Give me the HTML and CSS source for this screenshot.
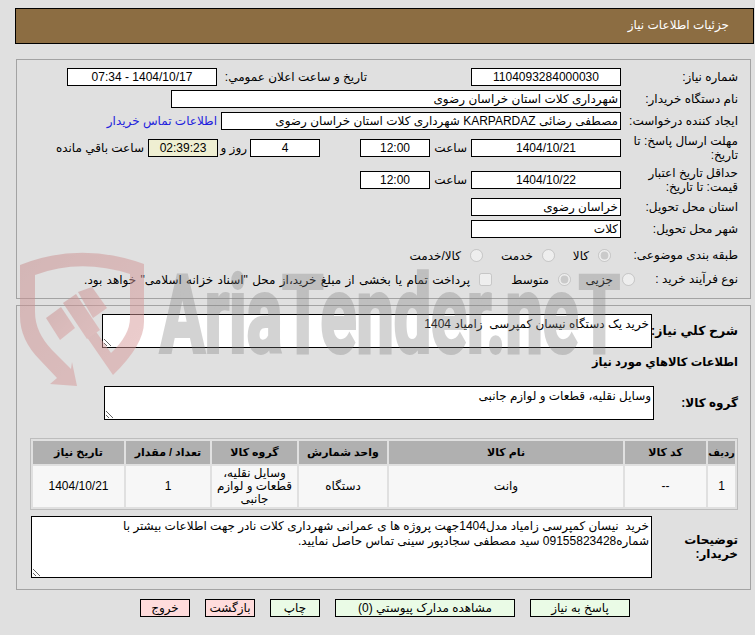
FILE: index.html
```html
<!DOCTYPE html>
<html lang="fa" dir="rtl">
<head>
<meta charset="utf-8">
<title>جزئیات اطلاعات نیاز</title>
<link rel="stylesheet" href="styles.css">
</head>
<body>
<header class="title-bar">جزئیات اطلاعات نیاز</header>

<section class="panel panel-top">
  <div class="row">
    <label class="lbl">شماره نیاز:</label>
    <input class="box w150 center" readonly value="1104093284000030">
    <label class="lbl-public">تاریخ و ساعت اعلان عمومي:</label>
    <input class="box w150 center" readonly value="1404/10/17 - 07:34">
  </div>
  <div class="row">
    <label class="lbl">نام دستگاه خریدار:</label>
    <input class="box w450" readonly value="شهرداری کلات استان خراسان رضوی">
  </div>
  <div class="row">
    <label class="lbl">ایجاد کننده درخواست:</label>
    <input class="box w400" readonly value="مصطفی رضائی KARPARDAZ شهرداری کلات استان خراسان رضوی">
    <a class="contact" href="#">اطلاعات تماس خریدار</a>
  </div>
  <div class="row">
    <label class="lbl">مهلت ارسال پاسخ: تا تاریخ:</label>
    <input class="box w150 center" readonly value="1404/10/21">
    <span class="txt-hour">ساعت</span>
    <input class="box w70 center" readonly value="12:00">
    <input class="box w70 center gap-40" readonly value="4">
    <span class="txt-day">روز و</span>
    <input class="box w70 center timer" readonly value="02:39:23">
    <span class="txt-left">ساعت باقي مانده</span>
  </div>
  <div class="row">
    <label class="lbl">حداقل تاریخ اعتبار قیمت: تا تاریخ:</label>
    <input class="box w150 center" readonly value="1404/10/22">
    <span class="txt-hour">ساعت</span>
    <input class="box w70 center" readonly value="12:00">
  </div>
  <div class="row">
    <label class="lbl">استان محل تحویل:</label>
    <input class="box w150" readonly value="خراسان رضوی">
  </div>
  <div class="row">
    <label class="lbl">شهر محل تحویل:</label>
    <input class="box w150" readonly value="کلات">
  </div>
  <div class="row row-opt row-cat">
    <label class="lbl">طبقه بندی موضوعی:</label>
    <span class="opts">
      <input type="radio" name="cat" disabled checked><span class="opt-text t-kala">کالا</span>
      <input type="radio" name="cat" disabled><span class="opt-text t-khed">خدمت</span>
      <input type="radio" name="cat" disabled><span class="opt-text">کالا/خدمت</span>
    </span>
  </div>
  <div class="row row-opt row-proc">
    <label class="lbl">نوع فرآیند خرید :</label>
    <span class="opts">
      <input type="radio" name="proc" disabled><span class="opt-text t-jozi">جزیی</span>
      <input type="radio" name="proc" disabled checked><span class="opt-text t-mot">متوسط</span>
      <input type="checkbox" disabled><span class="opt-text t-long">پرداخت تمام یا بخشی از مبلغ خرید،از محل "اسناد خزانه اسلامی" خواهد بود.</span>
    </span>
  </div>
</section>

<section class="panel panel-main">
  <div class="row row-area">
    <label class="lbl strong lbl-desc">شرح کلي نیاز:</label>
    <textarea class="area area-a" readonly>خرید یک دستگاه نیسان کمپرسی  زامیاد 1404</textarea>
  </div>
  <h2 class="sub">اطلاعات کالاهاي مورد نیاز</h2>
  <div class="row row-area row-group">
    <label class="lbl strong">گروه کالا:</label>
    <textarea class="area area-b" readonly>وسایل نقلیه، قطعات و لوازم جانبی</textarea>
  </div>
  <table class="items">
    <thead>
      <tr>
        <th class="c-row">ردیف</th>
        <th class="c-code">کد کالا</th>
        <th class="c-name">نام کالا</th>
        <th class="c-unit">واحد شمارش</th>
        <th class="c-group">گروه کالا</th>
        <th class="c-qty">تعداد / مقدار</th>
        <th class="c-date">تاریخ نیاز</th>
      </tr>
    </thead>
    <tbody>
      <tr>
        <td>1</td>
        <td>--</td>
        <td>وانت</td>
        <td>دستگاه</td>
        <td class="cell-group">وسایل نقلیه، قطعات و لوازم جانبی</td>
        <td>1</td>
        <td>1404/10/21</td>
      </tr>
    </tbody>
  </table>
  <div class="row row-area row-notes">
    <label class="lbl strong">توضیحات خریدار:</label>
    <textarea class="area area-c" readonly>خرید  نیسان کمپرسی زامیاد مدل1404جهت پروژه ها ی عمرانی شهرداری کلات نادر جهت اطلاعات بیشتر با شماره09155823428 سید مصطفی سجادپور سینی تماس حاصل نمایید.</textarea>
  </div>
</section>

<footer class="actions">
  <button class="btn ok w100">پاسخ به نیاز</button>
  <button class="btn ok w180">مشاهده مدارک پیوستي (0)</button>
  <button class="btn ok w50">چاپ</button>
  <button class="btn no w50">بازگشت</button>
  <button class="btn no w50">خروج</button>
</footer>

<svg class="watermark" width="755" height="635" viewBox="0 0 755 635" aria-hidden="true">
  <defs>
    <linearGradient id="lg" x1="0" y1="0" x2="1" y2="1">
      <stop offset="0" stop-color="#c88d8d"/>
      <stop offset="1" stop-color="#dc9d9d"/>
    </linearGradient>
  </defs>
  <g fill="url(#lg)" opacity=".5">
    <path d="M20 316V265Q80 241 144 264V322Q144 345 113 375L84 333L92 326L111 353Q130 335 130 318V274Q80 258 35 275V312Q35 332 52 350L71 369L72 362L77 386L50 384L57 378L40 360Q20 340 20 316Z"/>
    <path d="M46 318L61 307L75 328L60 340Z"/>
    <path d="M63 303L76 294L100 330L87 339Z"/>
    <path d="M78 292L92 287L107 308L93 318Z"/>
  </g>
  <text class="wm-text" x="160" y="352" textLength="460" lengthAdjust="spacingAndGlyphs">AriaTender.neT</text>
</svg>
</body>
</html>
```

FILE: styles.css
```css
* { box-sizing: border-box; }

html, body { margin: 0; padding: 0; }

body {
  position: relative;
  width: 755px;
  height: 635px;
  overflow: hidden;
  background: #e0e0e0;
  color: #000;
  font: 12px/15px "Liberation Sans", "DejaVu Sans", sans-serif;
  padding: 8px 1px 0 0;
}

.title-bar {
  height: 36px;
  margin-left: 15px;
  padding: 0 24px 0 0;
  background: #8c6d42;
  border: 1px solid #000;
  color: #fff;
  line-height: 33px;
}

.panel {
  margin-left: 16px;
  margin-right: 3px;
  border: 1px solid #a3a3a3;
  padding-right: 12px;
}

.panel-top {
  margin-top: 15px;
  height: 240px;
  padding-top: 8px;
  display: flex;
  flex-direction: column;
  gap: 4px;
}

.panel-main {
  margin-top: 6px;
  height: 285px;
  padding-top: 8px;
}

.row { display: flex; align-items: center; min-height: 18px; }

.lbl { width: 109px; margin-left: 8px; flex: none; line-height: 14px; }

.strong { font-weight: bold; font-size: 12px; }
.lbl-desc { font-size: 12.5px; white-space: nowrap; }

.box {
  height: 18px;
  border: 1px solid #000;
  background: #fff;
  padding: 0 2px;
  font: 12px "Liberation Sans", "DejaVu Sans", sans-serif;
  color: #000;
  outline: none;
  direction: rtl;
  flex: none;
}

.center { text-align: center; }
.w70 { width: 70px; }
.w150 { width: 150px; }
.w400 { width: 400px; }
.w450 { width: 450px; }
.timer { background: #efefd2; }
.gap-40 { margin-right: 40px; }

.lbl-public { margin: 0 104px 0 5px; width: 145px; white-space: nowrap; }

.contact { color: #2222dd; text-decoration: none; margin-right: 4px; white-space: nowrap; }

.txt-hour { width: 34px; margin: 0 4px 0 3px; white-space: nowrap; }
.txt-day { margin: 0 3px; width: 26px; white-space: nowrap; }
.txt-left { margin-right: 4px; white-space: nowrap; }

.row-cat { margin-top: 4px; }
.row-proc { margin-top: 2px; }

.opts { display: flex; align-items: center; }

.opts input { margin: 0; flex: none; width: 13px; height: 13px; }

.row-opt .lbl { white-space: nowrap; }
.row-cat .opts { padding-right: 10px; }
.row-proc .opts { margin-right: -14px; }
.opt-text { margin-right: 9px; white-space: nowrap; position: relative; top: 1px; }
.t-kala { width: 34px; }
.t-khed { width: 50px; }
.t-jozi { width: 42px; }
.t-mot { width: 57px; }
.t-long { word-spacing: 1px; }

.area {
  border: 1px solid #000;
  background: #fff;
  padding: 2px;
  margin: 0;
  font: 12px/15px "Liberation Sans", "DejaVu Sans", sans-serif;
  color: #000;
  outline: none;
  display: block;
  flex: none;
}

.area-a { width: 550px; height: 34px; }
.area-b { width: 550px; height: 34px; }
.area-c { width: 621px; height: 62px; }

.row-area .lbl { width: 86px; margin-left: 0; }
.row-group .lbl { width: 84px; }

.sub { margin: 7px 0 0; font: bold 11.5px/15px "Liberation Sans", "DejaVu Sans", sans-serif; }

.row-group { margin-top: 16px; }

.items {
  margin-top: 18px;
  width: 707px;
  border: 1px solid #bdbdbd;
  border-spacing: 2px;
  table-layout: fixed;
  font-size: 12px;
}

.items th {
  height: 23px;
  padding: 0;
  background: #b0b0b0;
  font-size: 11px;
  font-weight: bold;
}

.items td {
  height: 41px;
  padding: 0 6px;
  background: #f7f7f7;
  text-align: center;
  line-height: 13px;
}

.items .cell-group { padding: 0 1px; }

.items .c-row { width: 27px; font-size: 10px; }
.c-code { width: 81px; }
.c-name { width: 234px; }
.c-unit { width: 88px; }
.c-group { width: 85px; }
.c-qty { width: 84px; }
.c-date { width: 91px; }

.row-notes { margin-top: 6px; }

.actions {
  display: flex;
  gap: 15px;
  margin-top: 9px;
  padding-right: 124px;
}

.btn {
  height: 18px;
  padding: 0;
  border: 1px solid #000;
  font: 12px "Liberation Sans", "DejaVu Sans", sans-serif;
  color: #000;
  flex: none;
}

.ok { background: #eafbe6; }
.no { background: #ffdcdc; }
.w50 { width: 50px; }
.w100 { width: 100px; }
.w180 { width: 180px; }

.watermark {
  position: absolute;
  left: 0;
  top: 0;
  pointer-events: none;
}

.wm-text {
  direction: ltr;
  font: bold 108px Roboto, sans-serif;
  fill: #7d7d7d;
  stroke: #7d7d7d;
  stroke-width: 4px;
  opacity: .33;
}
```
